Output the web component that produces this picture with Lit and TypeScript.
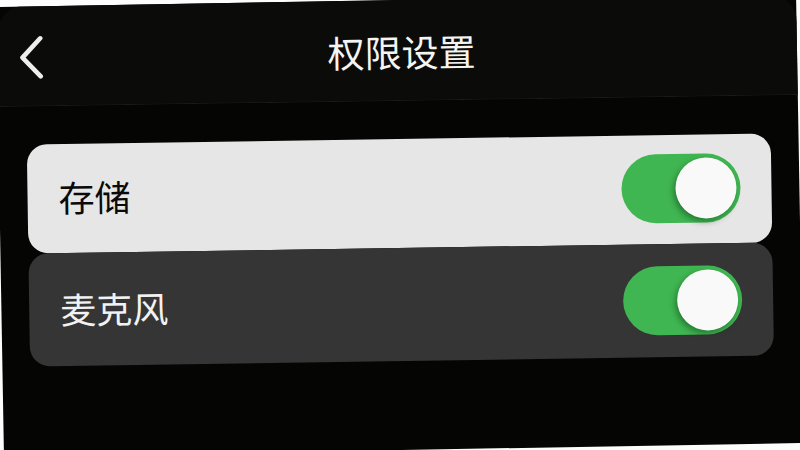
import { LitElement, html, css } from "lit";
import { customElement, state } from "lit/decorators.js";
import { classMap } from "lit/directives/class-map.js";

interface Permission {
  id: string;
  label: string;
  light: boolean;
  granted: boolean;
}

@customElement("app-root")
export class AppRoot extends LitElement {
  static styles = css`
    :host {
      display: block;
      overflow: hidden;
      background: #fdfdfd;
      font-family: "Noto Sans CJK SC", "Noto Sans", sans-serif;
    }
    .screen {
      min-height: 100vh;
      overflow: hidden;
      background: #050504;
      transform: rotate(-1deg);
    }
    .content {
      min-height: 100vh;
      transform: rotate(0.15deg);
    }
    .bar {
      display: grid;
      grid-template-columns: 64px 1fr 56px;
      align-items: center;
      box-sizing: border-box;
      height: 101px;
      padding-top: 4px;
      border-bottom: 1px solid #1b1b1b;
      border-radius: 28px 28px 0 0;
      background: #0b0b0a;
    }
    .back {
      display: flex;
      justify-content: flex-end;
      padding: 0 18px 0 0;
      border: 0;
      background: none;
      color: #eeeeee;
    }
    .back svg {
      width: 24px;
      height: 44px;
    }
    h1 {
      margin: 0;
      padding-bottom: 2px;
      color: #f4f4f2;
      font-size: 37px;
      font-weight: 400;
      line-height: 48px;
      text-align: center;
    }
    .list {
      display: flex;
      flex-direction: column;
      margin: 0;
      padding: 38px 28px 0;
      list-style: none;
    }
    .row {
      display: flex;
      align-items: center;
      justify-content: space-between;
      box-sizing: border-box;
      padding: 22px 31px 22px 30px;
      border-radius: 20px;
      background: #353535;
      color: #f2f2f2;
    }
    .row.light {
      padding-top: 19px;
      padding-bottom: 21px;
      background: #e6e6e7;
      color: #0a0a0a;
    }
    label {
      padding: 0 0 4px 1px;
      font-size: 36px;
      font-weight: 400;
      line-height: 48px;
    }
    .switch {
      display: flex;
      align-items: center;
      appearance: none;
      box-sizing: border-box;
      width: 119px;
      height: 69px;
      margin: 0;
      padding: 4px;
      border-radius: 35px;
      background: #8a8a8e;
    }
    .switch::before {
      content: "";
      width: 61px;
      height: 61px;
      border-radius: 50%;
      background: #f9f9f9;
      box-shadow: -2px 3px 6px rgba(0, 50, 10, 0.45);
    }
    .switch:checked {
      justify-content: flex-end;
      background: #40b652;
    }
  `;

  @state() private permissions: Permission[] = [
    { id: "storage", label: "存储", light: true, granted: true },
    { id: "microphone", label: "麦克风", light: false, granted: true },
  ];

  private toggle(id: string) {
    this.permissions = this.permissions.map((p) =>
      p.id === id ? { ...p, granted: !p.granted } : p,
    );
  }

  render() {
    return html`
      <div class="screen">
        <div class="content">
          <header class="bar">
            <button class="back" type="button" aria-label="返回">
              <svg viewBox="0 0 24 44" fill="none" stroke="currentColor"
                stroke-width="4.6" stroke-linecap="round" stroke-linejoin="round">
                <path d="M21 3 L3 22 L21 41" />
              </svg>
            </button>
            <h1>权限设置</h1>
          </header>
          <ul class="list">
            ${this.permissions.map(
              (p) => html`
                <li class=${classMap({ row: true, light: p.light })}>
                  <label for=${p.id}>${p.label}</label>
                  <input class="switch" type="checkbox" role="switch" id=${p.id}
                    .checked=${p.granted} @change=${() => this.toggle(p.id)} />
                </li>
              `,
            )}
          </ul>
        </div>
      </div>
    `;
  }
}
